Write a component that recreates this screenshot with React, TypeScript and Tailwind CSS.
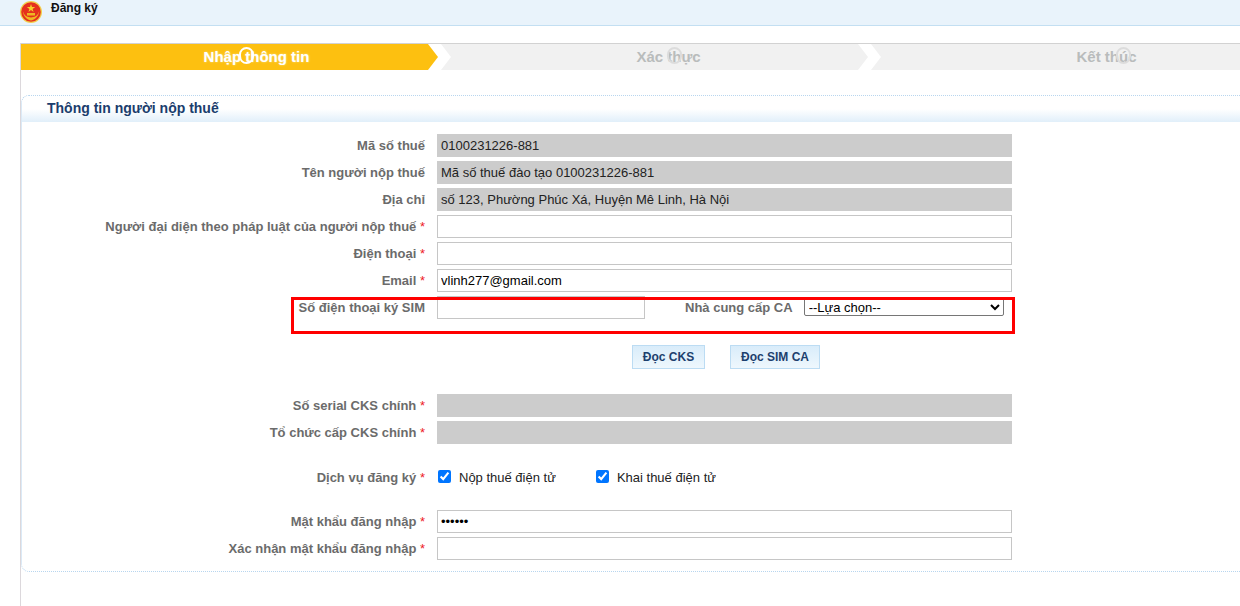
const labelClass =
  "w-[403px] shrink-0 text-right text-[13px] font-bold leading-[23px] text-[#6b6b6b]";
const inputClass =
  "h-[23px] border border-[#c6c6c6] bg-white px-[3px] text-[13px] text-black outline-none font-['Liberation_Sans',sans-serif]";

const Label = ({ text, required }: { text: string; required?: boolean }) => (
  <div className={labelClass}>
    {text}
    {required && <span className="text-[#ee1c25] font-normal"> *</span>}
  </div>
);

const Row = ({
  label,
  required,
  value,
  filled,
  type = "text",
}: {
  label: string;
  required?: boolean;
  value?: string;
  filled?: boolean;
  type?: string;
}) => (
  <div className="flex items-start gap-[12px] mb-[4px]">
    <Label text={label} required={required} />
    {filled ? (
      <div className="h-[23px] w-[575px] bg-[#cccccc] pl-[4px] text-[13px] leading-[23px] text-[#222]">{value}</div>
    ) : (
      <input readOnly type={type} value={value ?? ""} className={`${inputClass} w-[575px]`} />
    )}
  </div>
);

const Emblem = () => (
  <svg width="22" height="22" viewBox="0 0 22 22" className="mt-[1px] shrink-0">
    <circle cx="11" cy="11" r="11" fill="#f2cf4b" />
    <circle cx="11" cy="11" r="9.8" fill="#e5301d" />
    <polygon points="11,3 12,6 15.200,6 12.600,7.900 13.600,11 11,9.100 8.400,11 9.400,7.900 6.800,6 10,6" fill="#f5cf2a" />
    <path d="M2.800 10c.4 4.500 3.200 8.300 8.200 9.500c5-1.200 7.800-5 8.200-9.500c-1 3.200-2.400 4.900-4.700 5.700l-3.500 .9l-3.500-.9c-2.300-.8-3.700-2.500-4.700-5.700z" fill="#eeb722" />
    <rect x="7" y="12" width="8" height="2.500" fill="#eeb722" />
  </svg>
);

const Chevron = ({ active }: { active?: boolean }) => (
  <svg width="23" height="26" viewBox="0 0 23 26" className="shrink-0">
    <rect width="23" height="26" fill="#f1f1f1" />
    <polygon points="0,0 13,0 23,13 13,26 0,26" fill="#ffffff" />
    <polygon points="0,0 10,13 0,26" fill={active ? "#fdc010" : "#f1f1f1"} />
  </svg>
);

const Step = ({ text, circleLeft, light }: { text: string; circleLeft: string; light?: boolean }) => (
  <span className={`relative text-[15px] font-bold leading-[26px] ${light ? "text-white" : "text-[#b9bcbc]"}`}>
    {text}
    <span
      className={`absolute top-[3px] h-[17px] w-[15px] rounded-full border-2 ${circleLeft} ${
        light ? "border-white" : "border-[#dcdcdc]"
      }`}
    />
  </span>
);

const Button = ({ text, width }: { text: string; width: string }) => (
  <button
    type="button"
    className={`h-[24px] ${width} border border-[#bcdcf3] bg-gradient-to-b from-[#d9ecfa] to-[#eef7fd] text-[12px] font-bold text-[#1d3f6e]`}
  >
    {text}
  </button>
);

const Check = ({ text }: { text: string }) => (
  <label className="flex items-center text-[13px] leading-[16px] text-[#222]">
    <input type="checkbox" readOnly checked className="m-0 mb-[2px] h-[13px] w-[13px] accent-[#0075ff]" />
    <span className="ml-[8px]">{text}</span>
  </label>
);

export default function App() {
  return (
    <div className="relative h-[606px] w-full overflow-hidden bg-white font-['Liberation_Sans',Arial,sans-serif]">
      {/* Top bar */}
      <div className="flex h-[26px] items-start border-b border-[#c3dff2] bg-[#e9f3fb] pl-[20px]">
        <Emblem />
        <span className="ml-[9px] mt-[1px] text-[12px] font-bold leading-[14px] text-[#111]">Đăng ký</span>
      </div>

      <div className="ml-[20px] mt-[17px] h-[563px] border-l border-[#dcd8dc]">
        {/* Steps */}
        <div className="border-t border-[#d2d2d2]">
          <div className="flex h-[26px]">
            <div className="flex w-[407px] shrink-0 justify-center bg-[#fdc010] pl-[64px] [text-shadow:0_0_2px_#f5e6a0]">
              <Step text="Nhập thông tin" circleLeft="left-[35px]" light />
            </div>
            <Chevron active />
            <div className="flex w-[407px] shrink-0 justify-center bg-[#f1f1f1] pl-[28px]">
              <Step text="Xác thực" circleLeft="left-[31px]" />
            </div>
            <Chevron />
            <div className="flex flex-1 justify-center bg-[#f1f1f1] pl-[92px]">
              <Step text="Kết thúc" circleLeft="left-[39px]" />
            </div>
          </div>
        </div>

        {/* Taxpayer panel */}
        <div className="mt-[25px] h-[477px] rounded-l-[8px] border-y border-l border-dotted border-[#b8d6ef]">
          <div className="h-[26px] rounded-tl-[8px] bg-gradient-to-b from-white via-white to-[#e1effa] pl-[25px] text-[14px] font-bold leading-[24px] text-[#1b3d6d]">
            Thông tin người nộp thuế
          </div>

          <div className="pt-[12px]">
            <Row label="Mã số thuế" value="0100231226-881" filled />
            <Row label="Tên người nộp thuế" value="Mã số thuế đào tạo 0100231226-881" filled />
            <Row label="Địa chỉ" value="số 123, Phường Phúc Xá, Huyện Mê Linh, Hà Nội" filled />
            <Row label="Người đại diện theo pháp luật của người nộp thuế" required />
            <Row label="Điện thoại" required />
            <Row label="Email" required value="vlinh277@gmail.com" />

            <div className="flex items-start gap-[12px]">
              <Label text="Số điện thoại ký SIM" />
              <input readOnly value="" className={`${inputClass} w-[208px]`} />
              <div className="ml-[28px] text-[13px] font-bold leading-[23px] text-[#6b6b6b]">Nhà cung cấp CA</div>
              <select className="ml-[-1px] mt-[2px] h-[18px] w-[200px] rounded-[2px] border border-[#767676] bg-white text-[13px] leading-[16px] text-black">
                <option>--Lựa chọn--</option>
              </select>
            </div>

            <div className="mt-[26px] flex gap-[25px] pl-[610px]">
              <Button text="Đọc CKS" width="w-[73px]" />
              <Button text="Đọc SIM CA" width="w-[90px]" />
            </div>

            <div className="mt-[25px]">
              <Row label="Số serial CKS chính" required filled />
              <Row label="Tổ chức cấp CKS chính" required filled />
            </div>

            <div className="mt-[22px] flex items-center gap-[12px]">
              <Label text="Dịch vụ đăng ký" required />
              <div className="flex gap-[40px] pl-[1px]">
                <Check text="Nộp thuế điện tử" />
                <Check text="Khai thuế điện tử" />
              </div>
            </div>

            <div className="mt-[21px]">
              <Row label="Mật khẩu đăng nhập" required value="123456" type="password" />
              <Row label="Xác nhận mật khẩu đăng nhập" required />
            </div>
          </div>
        </div>
      </div>

      {/* Red highlight drawn over the form */}
      <div className="pointer-events-none absolute left-[291px] top-[297px] h-[37px] w-[724px] border-[3px] border-[#ff0000]" />
    </div>
  );
}
